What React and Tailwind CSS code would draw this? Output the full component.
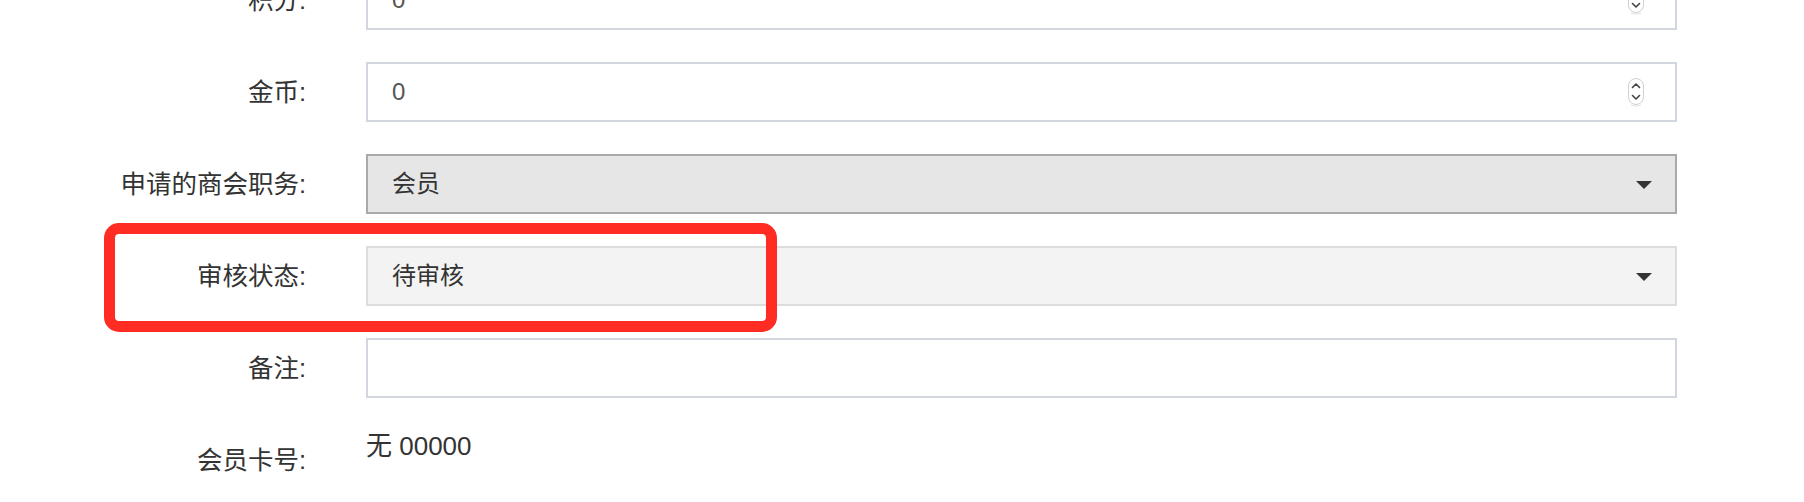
import React from "react";

const FONT = { fontFamily: '"Liberation Sans", "Noto Sans CJK SC", sans-serif' };

function Spinner() {
  return (
    <svg width="18" height="30" viewBox="0 0 18 30" className="shrink-0">
      <rect x="1.5" y="1.5" width="15" height="26" rx="7.5" fill="#fff" stroke="#d0d0d0" strokeWidth="1" />
      <path d="M4 28 Q9 30 14 28" stroke="#e2e2e2" strokeWidth="1.2" fill="none" />
      <path d="M5.5 10.5 L9 7 L12.5 10.5" stroke="#444" strokeWidth="1.6" fill="none" strokeLinecap="round" strokeLinejoin="round" />
      <path d="M5.5 18.5 L9 22 L12.5 18.5" stroke="#444" strokeWidth="1.6" fill="none" strokeLinecap="round" strokeLinejoin="round" />
    </svg>
  );
}

function Caret() {
  return (
    <svg width="16" height="8" viewBox="0 0 16 8" className="shrink-0">
      <polygon points="0,0 16,0 8,8" fill="#333" />
    </svg>
  );
}

function Label({ children, extra = "" }) {
  return (
    <div className={`w-[306px] shrink-0 text-right text-[25.5px] leading-[34px] text-[#333] ${extra}`}>{children}</div>
  );
}

function NumberRow({ label, value }) {
  return (
    <div className="flex items-center">
      <Label>{label}</Label>
      <div className="ml-[60px] flex h-[60px] w-[1311px] items-center justify-between border-2 border-[#d2d6de] bg-white pl-[24px] pr-[30px]">
        <span className="text-[24px] text-[#555]">{value}</span>
        <Spinner />
      </div>
    </div>
  );
}

function SelectRow({ label, value, bg, border }) {
  return (
    <div className="flex items-center">
      <Label>{label}</Label>
      <div className={`ml-[60px] flex h-[60px] w-[1311px] items-center justify-between border-2 pl-[24px] pr-[23px] ${bg} ${border}`}>
        <span className="text-[24px] text-[#333]">{value}</span>
        <div className="pt-[2px]">
          <Caret />
        </div>
      </div>
    </div>
  );
}

export default function App() {
  return (
    <div className="relative h-[502px] w-[1804px] overflow-hidden bg-white" style={FONT}>
      <div className="mt-[-30px] flex flex-col gap-[32px]">
        <NumberRow label="积分:" value="0" />
        <NumberRow label="金币:" value="0" />
        <SelectRow label="申请的商会职务:" value="会员" bg="bg-[#e6e6e6]" border="border-[#aaaaaa]" />
        <SelectRow label="审核状态:" value="待审核" bg="bg-[#f3f3f3]" border="border-[#dddddd]" />
        <div className="flex items-center">
          <Label>备注:</Label>
          <div className="ml-[60px] h-[60px] w-[1311px] border-2 border-[#d2d6de] bg-white" />
        </div>
        <div className="flex items-start">
          <Label extra="pt-[13px]">会员卡号:</Label>
          <div className="ml-[60px] mt-[-1px] text-[26px] leading-[34px] text-[#333]">无 00000</div>
        </div>
      </div>
      <div className="pointer-events-none absolute left-[104px] top-[223px] h-[109px] w-[673px] rounded-[15px] border-[11px] border-[#fe2c22]" />
    </div>
  );
}
